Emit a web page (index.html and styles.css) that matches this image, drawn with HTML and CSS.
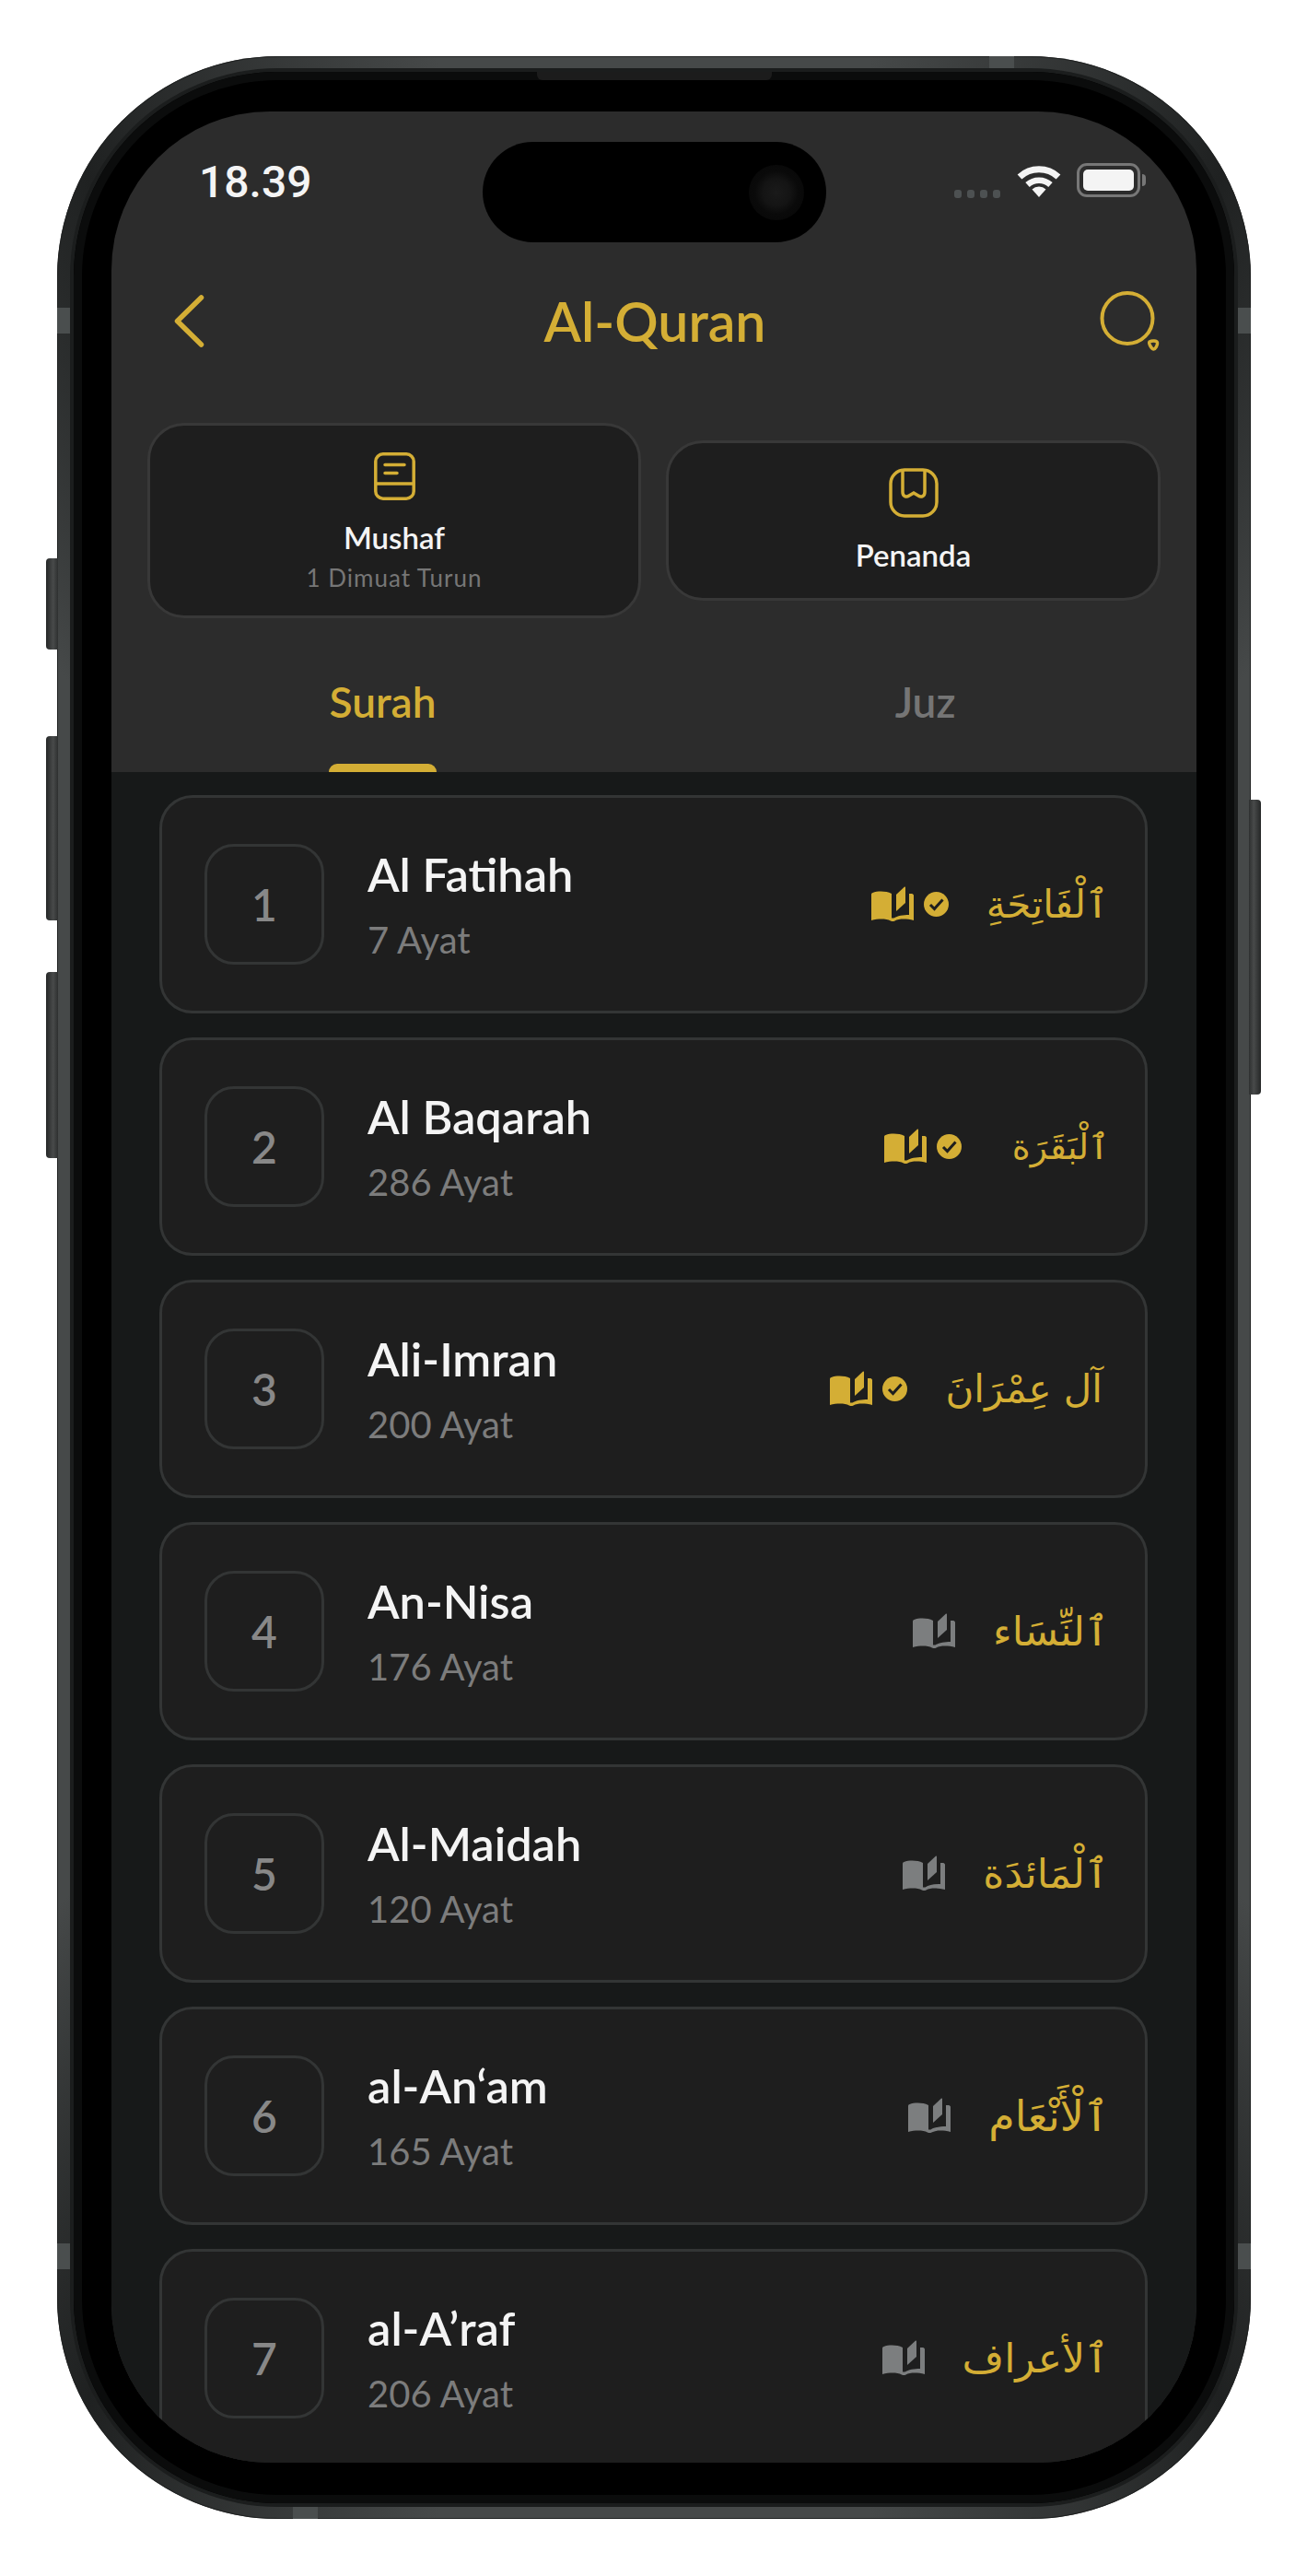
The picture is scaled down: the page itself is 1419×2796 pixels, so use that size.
FILE: index.html
```html
<!DOCTYPE html>
<html lang="en">
<head>
  <meta charset="UTF-8" />
  <meta name="viewport" content="width=device-width, initial-scale=1.0" />
  <title>Al-Quran</title>
  <link rel="stylesheet" href="styles.css">
</head>
<body>
  <div class="phone">
    <span class="side-btn btn-action"></span>
    <span class="side-btn btn-vol-up"></span>
    <span class="side-btn btn-vol-down"></span>
    <span class="side-btn btn-power"></span>
    <span class="band band-top"></span>
    <span class="band band-bottom"></span>
    <span class="band band-left-a"></span>
    <span class="band band-left-b"></span>
    <span class="band band-right-a"></span>
    <span class="band band-right-b"></span>

    <div class="bezel">
      <span class="speaker"></span>
      <div class="screen">
        <div class="island"><span class="lens"></span></div>

        <div class="status-bar">
          <span class="time">18.39</span>
          <div class="status-icons">
            <div class="signal"><i></i><i></i><i></i><i></i></div>
            <svg class="wifi" viewBox="0 0 48 36">
              <path d="M3 14A31 31 0 0 1 45 14" fill="none" stroke="#f4f4f4" stroke-width="7" />
              <path d="M11.500 22.500A18.500 18.500 0 0 1 36.500 22.500" fill="none" stroke="#f4f4f4" stroke-width="6.500" />
              <path d="M24 36L16.500 27.500A11 11 0 0 1 31.500 27.500Z" fill="#f4f4f4" />
            </svg>
            <div class="battery">
              <div class="battery-body"><span></span></div>
              <span class="battery-cap"></span>
            </div>
          </div>
        </div>

        <div class="nav">
          <svg class="back" viewBox="0 0 33 57">
            <path d="M29.500 3L3.500 28.500L29.500 54" fill="none" stroke="#d4ae35" stroke-width="5.500" stroke-linecap="round" stroke-linejoin="round" />
          </svg>
          <h1>Al-Quran</h1>
          <svg class="search" viewBox="0 0 65 65">
            <circle cx="30" cy="29.500" r="27.500" fill="none" stroke="#d4ae35" stroke-width="4" />
            <path d="M54 55c2.500-1.500 8-1.500 8.500 1 .4 2.500-2 7-4 7s-5.800-6-4.500-8z" fill="none" stroke="#d4ae35" stroke-width="3.500" />
          </svg>
        </div>

        <div class="shortcuts">
          <div class="shortcut shortcut-tall">
            <svg class="shortcut-icon mushaf-icon" viewBox="0 0 45 52">
              <rect x="1.800" y="1.800" width="41.400" height="48.400" rx="8" fill="none" stroke="#d4ae35" stroke-width="3.500" />
              <path d="M1.800 34H43.200" stroke="#d4ae35" stroke-width="3.500" />
              <path d="M12 13.500H33M12 22.500H25" stroke="#d4ae35" stroke-width="3.500" stroke-linecap="round" />
            </svg>
            <div class="shortcut-title">Mushaf</div>
            <div class="shortcut-sub">1 Dimuat Turun</div>
          </div>
          <div class="shortcut">
            <svg class="shortcut-icon penanda-icon" viewBox="0 0 54 54">
              <rect x="2" y="2" width="50" height="50" rx="15" fill="none" stroke="#d4ae35" stroke-width="3.500" />
              <path d="M15 2V26c0 5 4 6 7 4l5-3 5 3c3 2 7 1 7-4V2" fill="none" stroke="#d4ae35" stroke-width="3.500" />
            </svg>
            <div class="shortcut-title">Penanda</div>
          </div>
        </div>

        <div class="tabs">
          <div class="tab tab-active">Surah<span class="tab-bar"></span></div>
          <div class="tab">Juz</div>
        </div>

        <div class="list">
          <div class="row">
            <div class="num">1</div>
            <div class="info"><div class="name">Al Fatihah</div><div class="ayat">7 Ayat</div></div>
            <div class="marks">
              <svg class="book done" viewBox="0 0 46 39"><use href="#book" /></svg>
              <svg class="check" viewBox="0 0 27 27"><use href="#check" /></svg>
            </div>
            <div class="arabic arabic-wasl arabic-md" dir="rtl" lang="ar">ٱلْفَاتِحَةِ</div>
          </div>
          <div class="row">
            <div class="num">2</div>
            <div class="info"><div class="name">Al Baqarah</div><div class="ayat">286 Ayat</div></div>
            <div class="marks">
              <svg class="book done" viewBox="0 0 46 39"><use href="#book" /></svg>
              <svg class="check" viewBox="0 0 27 27"><use href="#check" /></svg>
            </div>
            <div class="arabic arabic-wasl arabic-sm" dir="rtl" lang="ar">ٱلْبَقَرَة</div>
          </div>
          <div class="row">
            <div class="num">3</div>
            <div class="info"><div class="name">Ali-Imran</div><div class="ayat">200 Ayat</div></div>
            <div class="marks">
              <svg class="book done" viewBox="0 0 46 39"><use href="#book" /></svg>
              <svg class="check" viewBox="0 0 27 27"><use href="#check" /></svg>
            </div>
            <div class="arabic arabic-md" dir="rtl" lang="ar">آل عِمْرَانَ</div>
          </div>
          <div class="row">
            <div class="num">4</div>
            <div class="info"><div class="name">An-Nisa</div><div class="ayat">176 Ayat</div></div>
            <div class="marks"><svg class="book" viewBox="0 0 46 39"><use href="#book" /></svg></div>
            <div class="arabic arabic-wasl" dir="rtl" lang="ar">ٱلنِّسَاء</div>
          </div>
          <div class="row">
            <div class="num">5</div>
            <div class="info"><div class="name">Al-Maidah</div><div class="ayat">120 Ayat</div></div>
            <div class="marks"><svg class="book" viewBox="0 0 46 39"><use href="#book" /></svg></div>
            <div class="arabic arabic-wasl" dir="rtl" lang="ar">ٱلْمَائدَة</div>
          </div>
          <div class="row">
            <div class="num">6</div>
            <div class="info"><div class="name">al-An‘am</div><div class="ayat">165 Ayat</div></div>
            <div class="marks"><svg class="book" viewBox="0 0 46 39"><use href="#book" /></svg></div>
            <div class="arabic arabic-wasl arabic-lg" dir="rtl" lang="ar">ٱلْأَنْعَام</div>
          </div>
          <div class="row">
            <div class="num">7</div>
            <div class="info"><div class="name">al-A’raf</div><div class="ayat">206 Ayat</div></div>
            <div class="marks"><svg class="book" viewBox="0 0 46 39"><use href="#book" /></svg></div>
            <div class="arabic arabic-wasl" dir="rtl" lang="ar">ٱلأعراف</div>
          </div>
        </div>
      </div>
    </div>
  </div>

  <svg class="defs" width="0" height="0">
    <defs>
      <g id="book">
        <path d="M22 8C16 5 7 5 1.500 7C.5 7.300 0 8 0 9V37C8 35 16 35 21 37.500C22.500 38.300 24 38.300 25.500 37.500C30 35 38 35 46 37V10C46 9 45 8 44 8H41V31C35 31 28 32 24.500 34.500L22 34.500Z" />
        <path d="M27 9L36 .6C36.500 .2 37 .5 37 1V18L27 27Z" />
      </g>
      <g id="check">
        <circle cx="13.500" cy="13.500" r="13.500" fill="#d4ae35" />
        <path d="M7 14L11.500 18.500L20.500 8.500" fill="none" stroke="#1e1e1e" stroke-width="3" />
      </g>
    </defs>
  </svg>
</body>
</html>
```

FILE: styles.css
```css
* {
  box-sizing: border-box;
}
body {
  margin: 0;
  height: 2796px;
  background-color: #ffffff;
  font-family: Lato, "Open Sans", sans-serif;
  overflow: hidden;
}
.defs {
  position: absolute;
}

/* device frame */
.phone {
  position: relative;
  width: 1296px;
  height: 2673px;
  margin: 61px 0 0 62px;
  padding: 17px 18px;
  border-radius: 240px;
  background: conic-gradient(#464949 0deg, #464949 10deg, #1f2121 27deg, #464949 44deg, #464949 136deg, #1f2121 153deg, #464949 170deg, #464949 190deg, #1f2121 207deg, #464949 224deg, #464949 316deg, #1f2121 333deg, #464949 350deg);
  box-shadow: inset 0 0 0 1px #202222;
}
.bezel {
  position: relative;
  height: 100%;
  padding: 43px 41px 44px;
  border-radius: 222px;
  background-color: #000000;
  box-shadow: 0 0 0 4px #1b1d1d, inset 0 0 0 9px #0b0c0c;
}
.speaker {
  position: absolute;
  top: 0;
  left: 503px;
  width: 255px;
  height: 9px;
  border-radius: 0 0 6px 6px;
  background-color: #1c1c1c;
}
.side-btn {
  position: absolute;
  width: 13px;
  background: linear-gradient(90deg, #252727, #484a4a 60%, #2e3030);
}
.btn-action, .btn-vol-up, .btn-vol-down {
  left: -12px;
  border-radius: 4px 0 0 4px;
}
.btn-action {
  top: 545px;
  height: 99px;
}
.btn-vol-up {
  top: 738px;
  height: 200px;
}
.btn-vol-down {
  top: 994px;
  height: 202px;
}
.btn-power {
  right: -11px;
  top: 807px;
  height: 320px;
  border-radius: 0 4px 4px 0;
  background: linear-gradient(270deg, #252727, #484a4a 60%, #2e3030);
}
.band {
  position: absolute;
  background-color: #4a4e4e;
}
.band-top, .band-bottom {
  width: 27px;
  height: 15px;
}
.band-top {
  top: 0;
  left: 1012px;
}
.band-bottom {
  bottom: 0;
  left: 256px;
}
.band-left-a, .band-left-b, .band-right-a, .band-right-b {
  width: 14px;
  height: 28px;
}
.band-left-a, .band-right-a {
  top: 273px;
}
.band-left-b, .band-right-b {
  top: 2374px;
}
.band-left-a, .band-left-b {
  left: 0;
}
.band-right-a, .band-right-b {
  right: 0;
}

/* screen */
.screen {
  position: relative;
  display: flex;
  flex-direction: column;
  height: 100%;
  border-radius: 172px;
  background-color: #2c2c2c;
  overflow: hidden;
}
.island {
  position: absolute;
  top: 33px;
  left: 403px;
  display: flex;
  justify-content: flex-end;
  align-items: center;
  width: 373px;
  height: 109px;
  padding-right: 24px;
  border-radius: 55px;
  background-color: #000000;
}
.lens {
  width: 60px;
  height: 60px;
  border-radius: 50%;
  background: radial-gradient(circle, #1a1a1a 0, #141414 35%, #0a0a0a 55%, #060606 100%);
}
.status-bar {
  display: flex;
  justify-content: space-between;
  align-items: flex-start;
  height: 182px;
  padding: 50px 55px 0 95px;
}
.time {
  font-family: Roboto, sans-serif;
  font-size: 48px;
  font-weight: 500;
  line-height: 54px;
  color: #f4f4f4;
}
.status-icons {
  display: flex;
  align-items: flex-start;
  padding-top: 6px;
}
.signal {
  display: flex;
  gap: 6px;
  margin: 29px 18px 0 0;
}
.signal i {
  width: 8px;
  height: 9px;
  border-radius: 3px;
  background-color: #4d5152;
}
.wifi {
  width: 48px;
  height: 36px;
  margin: 1px 17px 0 0;
}
.battery {
  display: flex;
  align-items: center;
}
.battery-body {
  width: 69px;
  height: 37px;
  padding: 4px;
  border: 3px solid #777777;
  border-radius: 11px;
}
.battery-body span {
  display: block;
  height: 100%;
  border-radius: 5px;
  background-color: #f4f4f4;
}
.battery-cap {
  width: 4px;
  height: 13px;
  margin-left: 2px;
  border-radius: 0 4px 4px 0;
  background-color: #777777;
}

.nav {
  display: flex;
  justify-content: space-between;
  align-items: center;
  height: 90px;
  padding: 0 40px 0 68px;
}
.back {
  width: 33px;
  height: 57px;
}
.nav h1 {
  margin: 0 0 0 6px;
  font-size: 59px;
  font-weight: 600;
  color: #d4ae35;
}
.search {
  width: 65px;
  height: 65px;
}

.shortcuts {
  display: grid;
  grid-template-columns: 536px 537px;
  gap: 27px;
  align-items: center;
  margin-top: 66px;
  padding-left: 39px;
}
.shortcut {
  display: flex;
  flex-direction: column;
  align-items: center;
  height: 174px;
  padding-top: 27px;
  border: 3px solid #383838;
  border-radius: 40px;
  background-color: #1e1e1e;
}
.shortcut-tall {
  height: 212px;
  padding-top: 29px;
}
.shortcut-icon {
  display: block;
}
.mushaf-icon {
  width: 45px;
  height: 52px;
}
.penanda-icon {
  width: 54px;
  height: 54px;
}
.shortcut-title {
  margin-top: 20px;
  font-size: 33px;
  font-weight: 600;
  line-height: 40px;
  color: #f4f4f4;
}
.shortcut-sub {
  margin-top: 8px;
  font-size: 26px;
  letter-spacing: 1px;
  line-height: 32px;
  color: #767676;
}

.tabs {
  display: grid;
  grid-template-columns: 1fr 1fr;
  height: 167px;
}
.tab {
  position: relative;
  padding-top: 63px;
  font-size: 46px;
  font-weight: 600;
  line-height: 56px;
  text-align: center;
  color: #757575;
}
.tab-active {
  color: #d4ae35;
}
.tab-bar {
  position: absolute;
  left: 236px;
  bottom: 0;
  width: 117px;
  height: 9px;
  border-radius: 10px 10px 0 0;
  background-color: #d4ae35;
}

/* surah list */
.list {
  flex: 1;
  display: flex;
  flex-direction: column;
  gap: 26px;
  padding: 25px 53px 0 52px;
  background-color: #171919;
  overflow: hidden;
}
.row {
  flex: 0 0 237px;
  display: flex;
  align-items: center;
  padding: 0 46px 0 46px;
  border: 3px solid #333535;
  border-radius: 36px;
  background-color: #1e1e1e;
}
.num {
  display: flex;
  justify-content: center;
  align-items: center;
  width: 130px;
  height: 131px;
  border: 3px solid #333535;
  border-radius: 32px;
  font-size: 48px;
  font-weight: 600;
  color: #888888;
}
.info {
  flex: 1;
  margin-left: 47px;
}
.name {
  font-size: 50.5px;
  font-weight: 600;
  line-height: 58px;
  color: #f4f4f4;
}
.ayat {
  margin-top: 19px;
  font-size: 40px;
  line-height: 46px;
  color: #7c7c7c;
}
.marks {
  display: flex;
  align-items: center;
  gap: 11px;
  margin-right: 41px;
}
.book {
  width: 46px;
  height: 39px;
  fill: #7c7e7f;
}
.book.done {
  fill: #d4ae35;
}
.check {
  width: 27px;
  height: 27px;
}
.arabic {
  font-family: "DejaVu Sans", sans-serif;
  font-size: 44px;
  color: #d4ae35;
}
.arabic-wasl {
  margin-right: -7px;
}
.arabic-md {
  font-size: 42px;
}
.arabic-sm {
  margin-left: 14px;
  font-size: 38px;
}
.arabic-lg {
  font-size: 46px;
}
```
